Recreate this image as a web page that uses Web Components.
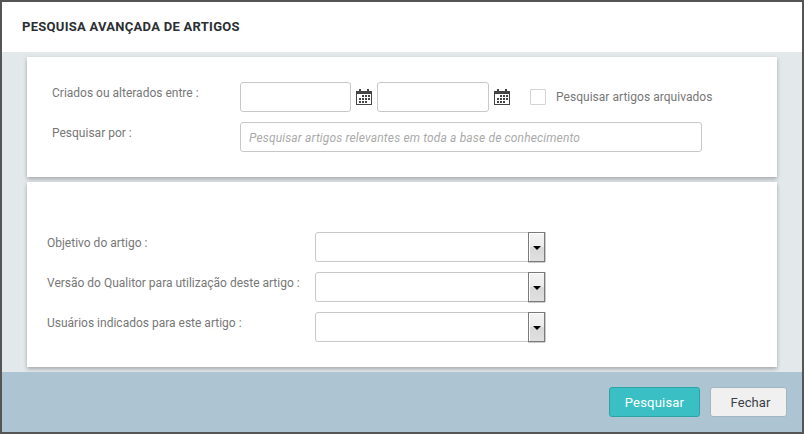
<!DOCTYPE html>
<html>
<head>
<meta charset="utf-8">
<style>
	html, body { margin: 0; padding: 0; }
	body { font-family: Roboto, "Liberation Sans", sans-serif; background: #fff; }
</style>
</head>
<body>
<search-dialog heading="PESQUISA AVANÇADA DE ARTIGOS">
	<form-card pad="25px 0 25px 25px">
		<div style="display:flex;flex-direction:column;gap:10px">
			<form-row label="Criados ou alterados entre :" width="188">
				<text-box width="111"></text-box>
				<calendar-icon></calendar-icon>
				<text-box width="112"></text-box>
				<calendar-icon></calendar-icon>
				<check-box label="Pesquisar artigos arquivados"></check-box>
			</form-row>
			<form-row label="Pesquisar por :" width="188">
				<text-box width="462" placeholder="Pesquisar artigos relevantes em toda a base de conhecimento"></text-box>
			</form-row>
		</div>
	</form-card>
	<form-card pad="50px 0 25px 20px" second>
		<div style="display:flex;flex-direction:column;gap:10px">
			<form-row label="Objetivo do artigo :" width="268"><select-box></select-box></form-row>
			<form-row label="Versão do Qualitor para utilização deste artigo :" width="268"><select-box></select-box></form-row>
			<form-row label="Usuários indicados para este artigo :" width="268"><select-box></select-box></form-row>
		</div>
	</form-card>
	<action-button slot="footer" primary>Pesquisar</action-button>
	<action-button slot="footer">Fechar</action-button>
</search-dialog>

<script>
class SearchDialog extends HTMLElement {
	constructor() {
		super();
		this.attachShadow({mode: 'open'});
		this.shadowRoot.innerHTML = `
			<style>
				:host { display: flex; flex-direction: column; width: 800px; height: 430px; border: 2px solid #555; background: #fff; }
				.head { height: 50px; display: flex; align-items: center; padding: 0 20px; box-sizing: border-box; padding-bottom: 1px;
					font-size: 13px; font-weight: 700; color: #2b2f33; letter-spacing: 0.28px; }
				.body { flex: 1; background: #e3e8eb; padding: 5px 25px; display: flex; flex-direction: column; gap: 5px; }
				.foot { height: 60px; background: #adc4d2; display: flex; justify-content: flex-end; align-items: center; gap: 10px;
					padding: 0 15px 0 0; box-sizing: border-box; }
			</style>
			<div class="head"></div>
			<div class="body"><slot></slot></div>
			<div class="foot"><slot name="footer"></slot></div>`;
	}

	connectedCallback() {
		this.shadowRoot.querySelector('.head').textContent = this.getAttribute('heading');
	}
}
customElements.define('search-dialog', SearchDialog);

class FormCard extends HTMLElement {
	constructor() {
		super();
		this.attachShadow({mode: 'open'});
		this.shadowRoot.innerHTML = `
			<style>
				:host { display: block; background: #fff; box-shadow: 0 2px 4px rgba(0,0,0,0.28); box-sizing: border-box; height: 120px; }
				:host([second]) { height: 185px; }
			</style>
			<slot></slot>`;
	}

	connectedCallback() {
		this.style.padding = this.getAttribute('pad');
	}
}
customElements.define('form-card', FormCard);

class FormRow extends HTMLElement {
	constructor() {
		super();
		this.attachShadow({mode: 'open'});
		this.shadowRoot.innerHTML = `
			<style>
				:host { display: flex; align-items: flex-start; font-size: 12px; color: #777; }
				.label { flex: none; line-height: 14px; padding-top: 4px; white-space: nowrap; }
				.field { display: flex; align-items: center; }
			</style>
			<div class="label"></div>
			<div class="field"><slot></slot></div>`;
	}

	connectedCallback() {
		const label = this.shadowRoot.querySelector('.label');
		label.textContent = this.getAttribute('label');
		label.style.width = this.getAttribute('width') + 'px';
	}
}
customElements.define('form-row', FormRow);

class TextBox extends HTMLElement {
	constructor() {
		super();
		this.attachShadow({mode: 'open'});
		this.shadowRoot.innerHTML = `
			<style>
				:host { display: block; box-sizing: border-box; height: 30px; border: 1px solid #c8c8c8; border-radius: 3px; background: #fff;
					font-size: 12px; font-style: italic; color: #aaa; line-height: 30px; padding-left: 8px; white-space: nowrap; letter-spacing: 0.15px; }
			</style>
			<span></span>`;
	}

	connectedCallback() {
		this.style.width = this.getAttribute('width') + 'px';
		this.shadowRoot.querySelector('span').textContent = this.getAttribute('placeholder') || '';
	}
}
customElements.define('text-box', TextBox);

class CalendarIcon extends HTMLElement {
	constructor() {
		super();
		this.attachShadow({mode: 'open'});
		this.shadowRoot.innerHTML = `
			<style>:host { display: block; width: 16px; height: 16px; margin: 0 5px 0 5px; } svg { display: block; }</style>
			<svg width="16" height="16" viewBox="0 0 16 16">
				<path fill="#444" d="M0 2h3V0h2v2h6V0h2v2h3v14H0z"/>
				<rect x="1" y="5" width="14" height="10" fill="#fff"/>
				<path fill="#444" d="M6 6h2v2H6zM9 6h2v2H9zM12 6h2v2h-2zM3 9h2v2H3zM6 9h2v2H6zM9 9h2v2H9zM12 9h2v2h-2zM3 12h2v2H3zM6 12h2v2H6zM9 12h2v2H9z"/>
			</svg>`;
	}
}
customElements.define('calendar-icon', CalendarIcon);

class CheckBox extends HTMLElement {
	constructor() {
		super();
		this.attachShadow({mode: 'open'});
		this.shadowRoot.innerHTML = `
			<style>
				:host { display: flex; align-items: center; margin-left: 15px; font-size: 12px; color: #777; white-space: nowrap; letter-spacing: 0.03px; }
				.box { width: 16px; height: 16px; box-sizing: border-box; border: 1px solid #d4d4d4; border-radius: 1px; margin-right: 10px; background: #fff; }
			</style>
			<div class="box"></div><span></span>`;
	}

	connectedCallback() {
		this.shadowRoot.querySelector('span').textContent = this.getAttribute('label');
	}
}
customElements.define('check-box', CheckBox);

class SelectBox extends HTMLElement {
	constructor() {
		super();
		this.attachShadow({mode: 'open'});
		this.shadowRoot.innerHTML = `
			<style>
				:host { display: flex; justify-content: flex-end; box-sizing: border-box; width: 230px; height: 30px; border: 1px solid #c8c8c8; border-radius: 3px 0 0 3px; background: #fff; }
				.arrow { box-sizing: border-box; width: 17px; height: 30px; margin: -1px -1px -1px 0; border: 1px solid #7a7a7a; box-shadow: 1px 0 0 #ccc, 0 1px 0 #ccc, inset 1px 1px 0 #fff;
					background: linear-gradient(#f4f4f4 0%, #ececec 48%, #d8d8d8 52%, #e0e0e0 100%);
					display: flex; align-items: center; justify-content: center; }
				.arrow i { width: 0; height: 0; border: 4px solid transparent; border-top: 4px solid #000; border-bottom: 0; margin-top: 2px; }
			</style>
			<div class="arrow"><i></i></div>`;
	}
}
customElements.define('select-box', SelectBox);

class ActionButton extends HTMLElement {
	constructor() {
		super();
		this.attachShadow({mode: 'open'});
		this.shadowRoot.innerHTML = `
			<style>
				:host { display: flex; align-items: center; justify-content: center; box-sizing: border-box; width: 77px; height: 30px; border: 1px solid #a3b5c1;
					border-radius: 3px; background: #f0f0f0; color: #3b3f4a; font-size: 13px; letter-spacing: 0.1px; padding-left: 4px; }
				:host([primary]) { width: 91px; background: #3ac0c4; border-color: #2ea3a6; color: #fff; letter-spacing: 0.2px; padding-left: 0; }
			</style>
			<slot></slot>`;
	}
}
customElements.define('action-button', ActionButton);
</script>
</body>
</html>
